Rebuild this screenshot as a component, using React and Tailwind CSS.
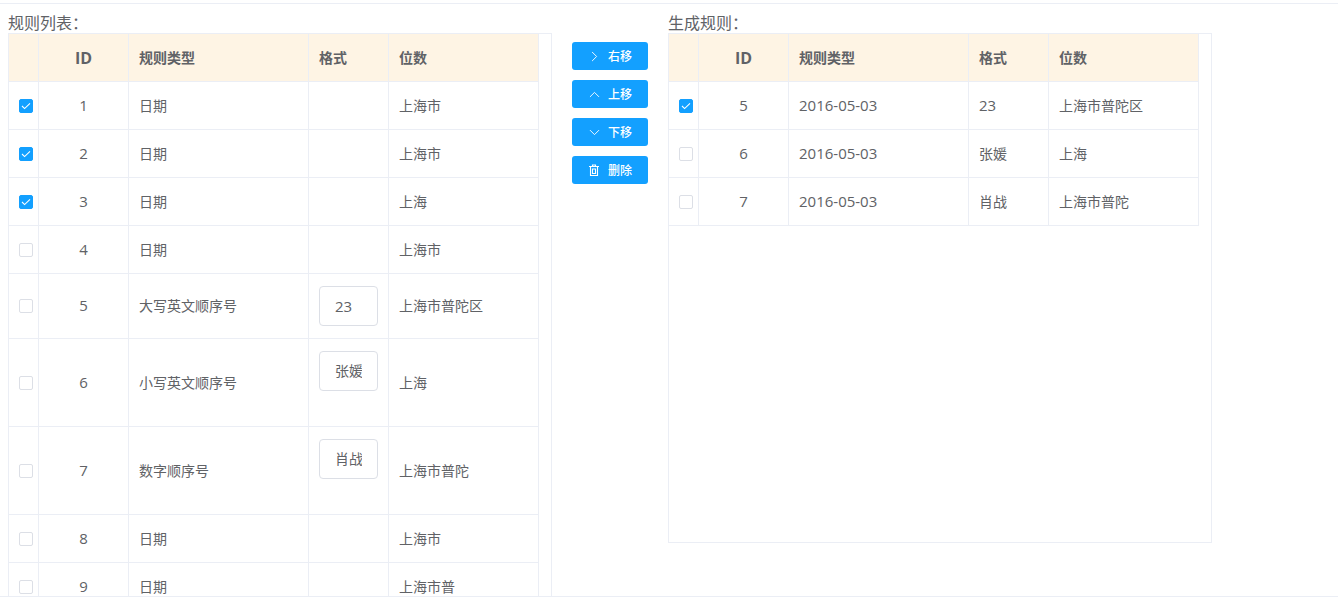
import { ChevronRight, ChevronUp, ChevronDown } from 'lucide-react';

const leftRows = [
    { id: 1, type: '日期', place: '上海市', checked: true },
    { id: 2, type: '日期', place: '上海市', checked: true },
    { id: 3, type: '日期', place: '上海', checked: true },
    { id: 4, type: '日期', place: '上海市' },
    { id: 5, type: '大写英文顺序号', place: '上海市普陀区', input: '23' },
    { id: 6, type: '小写英文顺序号', place: '上海', input: '张媛', tall: true },
    { id: 7, type: '数字顺序号', place: '上海市普陀', input: '肖战', tall: true },
    { id: 8, type: '日期', place: '上海市' },
    { id: 9, type: '日期', place: '上海市普' },
];

const rightRows = [
    { id: 5, type: '2016-05-03', format: '23', place: '上海市普陀区', checked: true },
    { id: 6, type: '2016-05-03', format: '张媛', place: '上海' },
    { id: 7, type: '2016-05-03', format: '肖战', place: '上海市普陀' },
];

const TrashIcon = () => (
    <svg width="12" height="12" viewBox="0 0 12 12" fill="none" stroke="currentColor" strokeWidth="1.1">
        <path d="M1 2.5h10M4.5 2.5v-1.5h3v1.5M2.5 2.5v9h7v-9M4.5 5v4.5h3v-4.5z" />
    </svg>
);

const Checkbox = ({ checked }) => (
    <span className={`flex w-[14px] h-[14px] items-center justify-center rounded-[2px] border ${checked ? 'bg-[#13a0ff] border-[#13a0ff]' : 'bg-white border-[#dcdfe6]'}`}>
        {checked && (
            <svg width="12" height="12" viewBox="0 0 12 12" fill="none" stroke="white" strokeWidth="1.1" className="shrink-0">
                <path d="M2 6l2.6 2.6L10 3.4" />
            </svg>
        )}
    </span>
);

const borderCell = 'border-r border-b border-[#ebeef5] p-0 align-middle';

const HeadRow = () => (
    <tr className="h-[48px] bg-[#fef4e4]">
        <th className={borderCell}></th>
        <th className={`${borderCell} text-center text-base font-bold`}>ID</th>
        <th className={`${borderCell} text-left pl-[10px] font-bold`}>规则类型</th>
        <th className={`${borderCell} text-left pl-[10px] font-bold`}>格式</th>
        <th className={`${borderCell} text-left pl-[10px] font-bold`}>位数</th>
    </tr>
);

const ColGroup = () => (
    <colgroup>
        <col className="w-[30px]" />
        <col className="w-[90px]" />
        <col className="w-[180px]" />
        <col className="w-[80px]" />
        <col className="w-[150px]" />
    </colgroup>
);

const tableClass = 'w-[530px] table-fixed border-separate border-spacing-0 text-sm text-[#606266]';

const LeftTable = () => (
    <table className={tableClass}>
        <ColGroup />
        <thead>
            <HeadRow />
        </thead>
        <tbody>
            {leftRows.map((row) => (
                <tr key={row.id} className="h-[48px]">
                    <td className={`${borderCell} pl-[10px]`}><Checkbox checked={row.checked} /></td>
                    <td className={`${borderCell} text-center text-[15px]`}>{row.id}</td>
                    <td className={`${borderCell} pl-[10px]`}>{row.type}</td>
                    <td className={`${borderCell} pl-[10px]`}>
                        {row.input && (
                            <div className={`py-[12px] ${row.tall ? 'pb-[35px]' : ''}`}>
                                <input
                                    readOnly
                                    value={row.input}
                                    className={`block w-[59px] h-[40px] rounded-[4px] border border-[#dcdfe6] px-[15px] outline-none text-[#606266] ${row.tall ? 'pb-[2px] text-sm' : 'text-[15px]'}`}
                                />
                            </div>
                        )}
                    </td>
                    <td className={`${borderCell} pl-[10px]`}>{row.place}</td>
                </tr>
            ))}
        </tbody>
    </table>
);

const RightTable = () => (
    <table className={tableClass}>
        <ColGroup />
        <thead>
            <HeadRow />
        </thead>
        <tbody>
            {rightRows.map((row) => (
                <tr key={row.id} className="h-[48px]">
                    <td className={`${borderCell} pl-[10px]`}><Checkbox checked={row.checked} /></td>
                    <td className={`${borderCell} text-center text-[15px]`}>{row.id}</td>
                    <td className={`${borderCell} pl-[10px] text-[15px]`}>{row.type}</td>
                    <td className={`${borderCell} pl-[10px] ${row.id === 5 ? 'text-[15px]' : ''}`}>{row.format}</td>
                    <td className={`${borderCell} pl-[10px]`}>{row.place}</td>
                </tr>
            ))}
        </tbody>
    </table>
);

const ActionButton = ({ icon, children }) => (
    <button className="flex w-[76px] h-[28px] items-center rounded-[3px] bg-[#13a0ff] pl-[16px] text-xs font-medium text-white">
        <span className="flex w-[12px] justify-center">{icon}</span>
        <span className="ml-[8px] pt-[1px]">{children}</span>
    </button>
);

const App = () => {
    return (
        <div
            className="h-[597px] w-[1338px] overflow-hidden bg-white pt-[3px] text-[#606266]"
            style={{ fontFamily: '"Open Sans", "Noto Sans CJK SC", sans-serif' }}
        >
            <div className="flex h-[594px] border-t border-b border-[#ebeef5] pl-[8px] overflow-hidden">
                <div className="w-[544px] shrink-0">
                    <div className="h-[29px] pt-[10px] text-base leading-[19px]">规则列表：</div>
                    <div className="h-[600px] border-t border-l border-r border-[#ebeef5]">
                        <LeftTable />
                    </div>
                </div>
                <div className="flex w-[116px] shrink-0 flex-col items-center gap-[10px] pt-[38px]">
                    <ActionButton icon={<ChevronRight size={17} strokeWidth={1.3} className="shrink-0" />}>右移</ActionButton>
                    <ActionButton icon={<ChevronUp size={17} strokeWidth={1.3} className="shrink-0" />}>上移</ActionButton>
                    <ActionButton icon={<ChevronDown size={17} strokeWidth={1.3} className="shrink-0" />}>下移</ActionButton>
                    <ActionButton icon={<TrashIcon />}>删除</ActionButton>
                </div>
                <div className="w-[544px] shrink-0">
                    <div className="h-[29px] pt-[10px] text-base leading-[19px]">生成规则：</div>
                    <div className="h-[510px] border border-[#ebeef5]">
                        <RightTable />
                    </div>
                </div>
            </div>
        </div>
    );
};

export default App;
